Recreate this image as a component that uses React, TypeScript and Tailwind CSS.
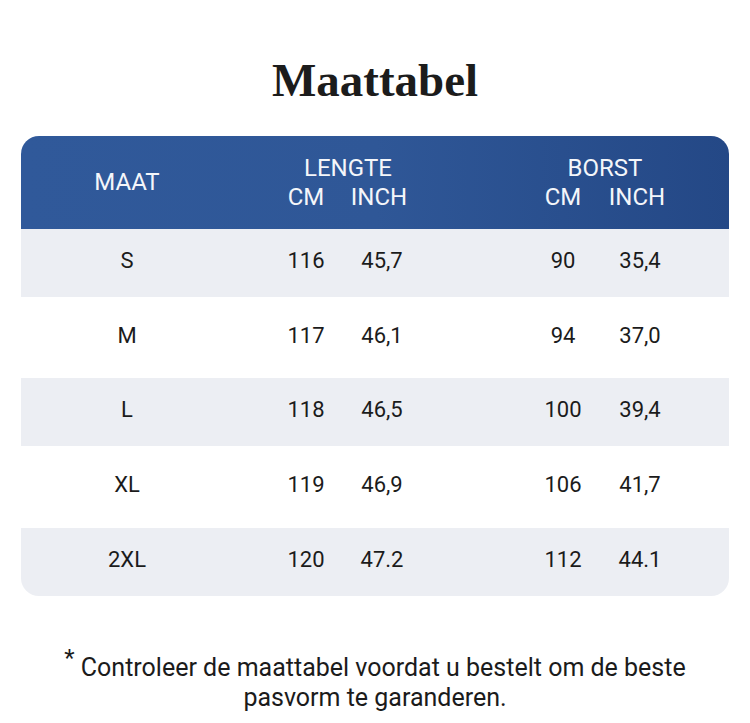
const rows = [
  { size: "S", lCm: "116", lIn: "45,7", bCm: "90", bIn: "35,4", h: "h-[68px]", shade: true },
  { size: "M", lCm: "117", lIn: "46,1", bCm: "94", bIn: "37,0", h: "h-[81px]", shade: false },
  { size: "L", lCm: "118", lIn: "46,5", bCm: "100", bIn: "39,4", h: "h-[68px]", shade: true },
  { size: "XL", lCm: "119", lIn: "46,9", bCm: "106", bIn: "41,7", h: "h-[82px]", shade: false },
  { size: "2XL", lCm: "120", lIn: "47.2", bCm: "112", bIn: "44.1", h: "h-[68px]", shade: true },
];

const HeaderRow = () => {
  return (
    <div className="flex h-[93px] items-center rounded-t-[18px] bg-gradient-to-r from-[#30599a] via-[#2f5797] to-[#244886] text-[24px] leading-[29px] text-[#f4f6fa]">
      <div className="w-[212px] text-center">MAAT</div>
      <div className="ml-[38px] w-[146px]">
        <div className="pl-[8px] text-center">LENGTE</div>
        <div className="flex">
          <div className="w-[70px] text-center">CM</div>
          <div className="w-[76px] text-center">INCH</div>
        </div>
      </div>
      <div className="ml-[111px] w-[148px]">
        <div className="pl-[6px] text-center">BORST</div>
        <div className="flex">
          <div className="w-[70px] text-center">CM</div>
          <div className="w-[78px] text-center">INCH</div>
        </div>
      </div>
    </div>
  );
};

const SizeRow = ({ row, last }: { row: any; last: boolean }) => {
  return (
    <div
      className={`flex items-center pb-[4px] ${row.h} ${row.shade ? "bg-[#eceef3]" : "bg-white"} ${
        last ? "rounded-b-[18px]" : ""
      } text-[22px] leading-[26px] text-[#1b1b1b]`}
    >
      <div className="w-[212px] text-center">{row.size}</div>
      <div className="ml-[38px] w-[70px] text-center">{row.lCm}</div>
      <div className="w-[76px] pl-[6px] text-center">{row.lIn}</div>
      <div className="ml-[111px] w-[70px] text-center">{row.bCm}</div>
      <div className="w-[78px] pl-[6px] text-center">{row.bIn}</div>
    </div>
  );
};

export default function App() {
  return (
    <div className="min-h-[723px] w-[750px] bg-white pt-[57px] font-['Roboto',sans-serif]">
      <h1 className="text-center font-['Liberation_Serif',serif] text-[47px] font-bold leading-[47px] text-[#1c1c1c]">
        Maattabel
      </h1>
      <div className="mx-[21px] mt-[32px]">
        <HeaderRow />
        {rows.map((row, idx) => (
          <SizeRow row={row} last={idx === rows.length - 1} key={idx} />
        ))}
      </div>
      <p className="mt-[57px] text-center text-[25px] leading-[29px] text-[#1b1b1b]">
        <span className="relative top-[-10px] text-[24px]">*</span> Controleer de maattabel voordat u bestelt om de beste
        <br />
        pasvorm te garanderen.
      </p>
    </div>
  );
}
